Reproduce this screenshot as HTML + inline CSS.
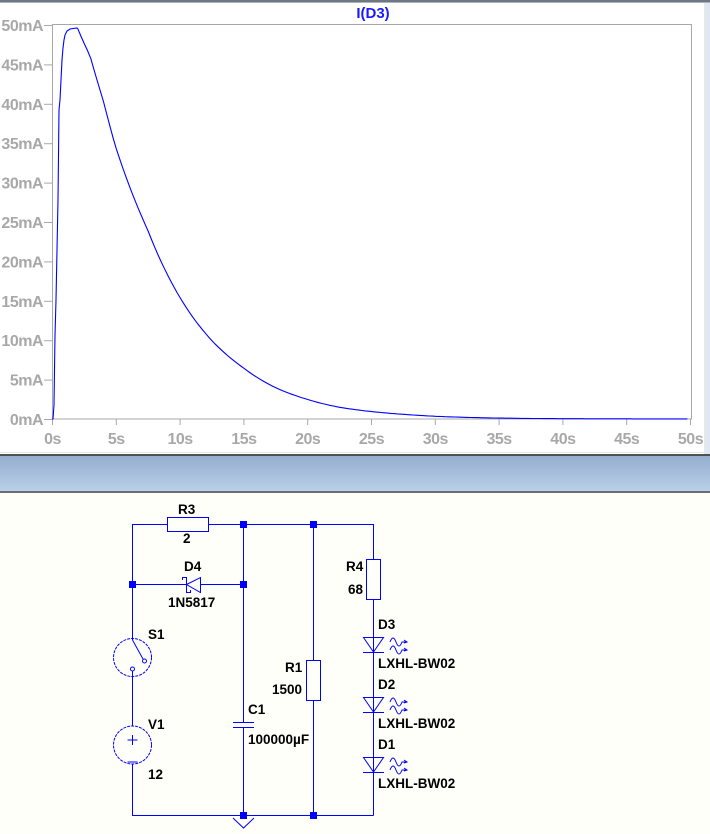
<!DOCTYPE html>
<html><head><meta charset="utf-8"><style>
html,body{margin:0;padding:0;width:710px;height:834px;overflow:hidden;background:#fffffa;}
svg{display:block}
</style></head><body>
<svg id="s" width="710" height="834" xmlns="http://www.w3.org/2000/svg" font-family="Liberation Sans, Arial, sans-serif">
<rect x="0" y="0" width="710" height="456" fill="#ffffff"/>
<rect x="0" y="0" width="710" height="2" fill="#707780"/>
<rect x="0" y="2" width="710" height="1" fill="#a8b4c4"/>
<rect x="706" y="3" width="4" height="453" fill="#dde8f4"/>
<rect x="704" y="3" width="2" height="453" fill="#e8e8e8"/>
<rect x="0" y="452" width="706" height="1" fill="#e4e4e4"/>
<rect x="52.5" y="24.5" width="639" height="394.5" fill="none" stroke="#a8a8a8" stroke-width="1"/>
<text x="373" y="18" fill="#1a1aff" font-size="15" font-weight="bold" text-anchor="middle">I(D3)</text>
<g id="yt" fill="#a8a8a8" font-size="16" font-weight="bold" text-anchor="end" letter-spacing="-0.5"></g>
<g id="xt" fill="#a8a8a8" font-size="16" font-weight="bold" text-anchor="middle" letter-spacing="-0.5"></g>
<path id="curve" fill="none" stroke="#0000ff" stroke-width="1.1" d=""/>
<rect x="0" y="454" width="710" height="2" fill="#505050"/>
<defs><linearGradient id="g" x1="0" y1="0" x2="0" y2="1"><stop offset="0" stop-color="#95aece"/><stop offset="1" stop-color="#b9d0e8"/></linearGradient></defs>
<rect x="0" y="456" width="710" height="35" fill="url(#g)"/>
<rect x="0" y="491" width="710" height="2" fill="#6e6e6e"/>
<rect x="0" y="493" width="710" height="341" fill="#fffffa"/>
<g stroke="#0000ff" stroke-width="1" fill="none">
<polyline points="132.5,640 132.5,524.5 167,524.5"/>
<line x1="208" y1="524.5" x2="373.5" y2="524.5"/>
<rect x="167.5" y="517.5" width="41" height="14"/>
<line x1="132" y1="584.5" x2="186" y2="584.5"/>
<line x1="200" y1="584.5" x2="243" y2="584.5"/>
<polygon points="186.5,584.5 200.5,577.5 200.5,592.5"/>
<polyline points="182.5,580 182.5,577.5 186.5,577.5 186.5,592.5 190.5,592.5 190.5,590"/>
<line x1="243.5" y1="524" x2="243.5" y2="722"/>
<line x1="243.5" y1="727" x2="243.5" y2="815"/>
<line x1="233" y1="722.5" x2="254" y2="722.5"/>
<line x1="233" y1="727.5" x2="254" y2="727.5"/>
<line x1="313.5" y1="524" x2="313.5" y2="660"/>
<rect x="306.5" y="660.5" width="14" height="40"/>
<line x1="313.5" y1="700" x2="313.5" y2="815"/>
<line x1="373.5" y1="524" x2="373.5" y2="559"/>
<rect x="366.5" y="559.5" width="14" height="40"/>
<line x1="373.5" y1="599" x2="373.5" y2="815.5"/>
<polyline points="132.5,671 132.5,726"/>
<polyline points="132.5,764 132.5,815.5 373.5,815.5"/>
<circle cx="132.5" cy="657.5" r="19" stroke-dasharray="3 1"/>
<line x1="132.5" y1="640" x2="143" y2="659"/>
<circle cx="144.5" cy="661" r="2"/>
<circle cx="132.5" cy="669" r="2"/>
<circle cx="132.5" cy="745" r="19" stroke-dasharray="3 1"/>
<line x1="132.5" y1="735" x2="132.5" y2="745"/>
<line x1="127.5" y1="740" x2="137.5" y2="740"/>
<line x1="127.5" y1="762" x2="137.5" y2="762"/>
<polyline points="233,818 243.5,828 254,818"/>
</g>
<g id="leds" stroke="#0000ff" stroke-width="1" fill="none"></g>
<g fill="#0000ff">
<rect x="129" y="581" width="7" height="7"/><rect x="240" y="581" width="7" height="7"/>
<rect x="240" y="521" width="7" height="7"/><rect x="310" y="521" width="7" height="7"/>
<rect x="240" y="812" width="7" height="7"/><rect x="310" y="812" width="7" height="7"/>
</g>
<g fill="#000" font-size="13.5" font-weight="bold">
<text x="178" y="514">R3</text><text x="183" y="543">2</text>
<text x="184" y="571">D4</text><text x="168" y="607">1N5817</text>
<text x="148" y="639">S1</text><text x="148" y="729">V1</text><text x="148" y="779">12</text>
<text x="248" y="714">C1</text><text x="248" y="744">100000µF</text>
<text x="285" y="672">R1</text><text x="272" y="694">1500</text>
<text x="346" y="571">R4</text><text x="348" y="594">68</text>
<text x="378" y="629">D3</text><text x="378" y="668">LXHL-BW02</text>
<text x="378" y="689">D2</text><text x="378" y="728">LXHL-BW02</text>
<text x="378" y="749">D1</text><text x="378" y="788">LXHL-BW02</text>
</g>
</svg>
<script>
var NS="http://www.w3.org/2000/svg";
function el(p,t,a,txt){var e=document.createElementNS(NS,t);for(var k in a)e.setAttribute(k,a[k]);if(txt!=null)e.textContent=txt;document.getElementById(p).appendChild(e);return e;}
var s=document.getElementById('s');
for(var i=0;i<=10;i++){var y=419-i*39.4;el('yt','text',{x:43,y:y+6},(i*5)+'mA');
 var l=document.createElementNS(NS,'line');l.setAttribute('x1',44);l.setAttribute('x2',52);l.setAttribute('y1',y+.5);l.setAttribute('y2',y+.5);l.setAttribute('stroke','#a8a8a8');s.insertBefore(l,document.getElementById('curve'));}
for(var i=0;i<=10;i++){var x=52.5+i*63.8;el('xt','text',{x:x,y:444},(i*5)+'s');
 var l=document.createElementNS(NS,'line');l.setAttribute('x1',x);l.setAttribute('x2',x);l.setAttribute('y1',419);l.setAttribute('y2',425);l.setAttribute('stroke','#a8a8a8');s.insertBefore(l,document.getElementById('curve'));}
var d="M52,419 L53,419 L54,405 L55,335 L56,300 L58,200 L59,110 L60,100 L61,80 L62,60 L63,48 L64,40 L65,35 L67,31 L70,29 L77,28 L78,29";
var pts=[[2.05,49.4],[3,46],[4,40.5],[5,34.5],[7.5,24],[10,15.5],[12.5,10],[15,6.5],[17.5,4],[20,2.5],[22.5,1.5],[25,0.95],[27.5,0.6],[30,0.35],[35,0.12],[40,0.04],[50,0.01]];
for(var t=2.05;t<=50;t+=0.25){var j=0;while(j<pts.length-2&&pts[j+1][0]<t)j++;var a=pts[j],b=pts[j+1];var f=(t-a[0])/(b[0]-a[0]);var I=Math.exp(Math.log(a[1])*(1-f)+Math.log(b[1])*f);
 d+=" L"+(52+t*12.76).toFixed(1)+","+(419-I*7.88).toFixed(1);}
document.getElementById('curve').setAttribute('d',d);
[637,697,757].forEach(function(y){
 el('leds','polygon',{points:"363.5,"+(y+.5)+" 383.5,"+(y+.5)+" 373.5,"+(y+15)});
 el('leds','line',{x1:363,y1:y+15.5,x2:384,y2:y+15.5});
 for(var k=0;k<2;k++){var yy=y+1+k*8;
  el('leds','path',{d:"M390,"+(yy+4)+" q3,-8 6,0 q3,8 6,0 l5,0 m-3,-2 l3,2 l-3,1"});}
});
</script>
</body></html>
